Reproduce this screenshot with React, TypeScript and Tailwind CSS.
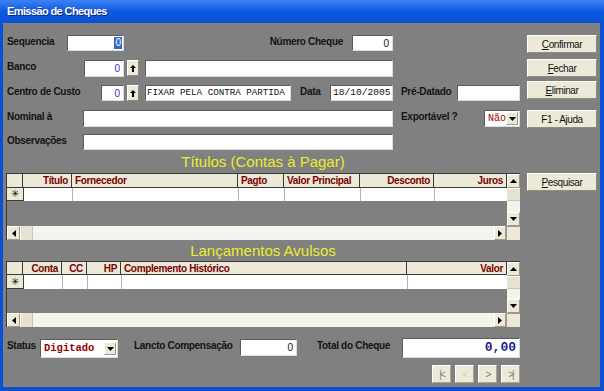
import React from 'react';

type Col = { label: string; w: string; align: 'left' | 'right' };

const titulosCols: Col[] = [
  { label: 'Título', w: 'w-[49px]', align: 'right' },
  { label: 'Fornecedor', w: 'w-[166px]', align: 'left' },
  { label: 'Pagto', w: 'w-[46px]', align: 'left' },
  { label: 'Valor Principal', w: 'w-[76px]', align: 'left' },
  { label: 'Desconto', w: 'w-[74px]', align: 'right' },
  { label: 'Juros', w: 'w-[73px]', align: 'right' },
];

const avulsosCols: Col[] = [
  { label: 'Conta', w: 'w-[39px]', align: 'right' },
  { label: 'CC', w: 'w-[25px]', align: 'right' },
  { label: 'HP', w: 'w-[34px]', align: 'right' },
  { label: 'Complemento Histórico', w: 'w-[286px]', align: 'left' },
  { label: 'Valor', w: 'w-[100px]', align: 'right' },
];

function Label({ children, className = '' }: { children: React.ReactNode; className?: string }) {
  return (
    <span className={`text-[10px] font-bold tracking-[-0.3px] leading-[13px] text-[#141414] whitespace-nowrap shrink-0 ${className}`}>
      {children}
    </span>
  );
}

function Field({ children, className = '' }: { children?: React.ReactNode; className?: string }) {
  return (
    <div
      className={`bg-white border-t border-l border-t-[#5c5c5c] border-l-[#5c5c5c] border-b border-r border-b-[#dcdcdc] border-r-[#dcdcdc] flex items-center shrink-0 overflow-hidden whitespace-nowrap ${className}`}
    >
      {children}
    </div>
  );
}

function Tri({ dir }: { dir: 'up' | 'down' | 'left' | 'right' }) {
  const pts = {
    up: '0,4 3.5,0 7,4',
    down: '0,0 7,0 3.5,4',
    left: '4,0 4,7 0,3.5',
    right: '0,0 0,7 4,3.5',
  }[dir];
  const vertical = dir === 'up' || dir === 'down';
  return (
    <svg width={vertical ? 7 : 4} height={vertical ? 4 : 7} viewBox={vertical ? '0 0 7 4' : '0 0 4 7'}>
      <polygon points={pts} fill="#000" />
    </svg>
  );
}

function ScrollBtn({ dir, className = '' }: { dir: 'up' | 'down' | 'left' | 'right'; className?: string }) {
  return (
    <div className={`bg-[#ece9d8] border-t border-l border-t-white border-l-white border-b border-r border-b-[#9d9a8a] border-r-[#9d9a8a] flex items-center justify-center shrink-0 ${className}`}>
      <Tri dir={dir} />
    </div>
  );
}

function LookupBtn() {
  return (
    <div className="w-[12px] h-[16px] ml-[3px] bg-[#ece9d8] border-t border-l border-white border-b border-r border-b-[#8a887c] border-r-[#8a887c] flex items-center justify-center shrink-0">
      <svg width="6" height="7" viewBox="0 0 6 7">
        <polygon points="3,0 6,3 4,3 4,7 2,7 2,3 0,3" fill="#000" />
      </svg>
    </div>
  );
}

function Combo({ value, className = '', textClass = '' }: { value: string; className?: string; textClass?: string }) {
  return (
    <Field className={`justify-between pl-[3px] pr-[1px] ${className}`}>
      <span className={`font-['Liberation_Mono',monospace] text-[#9a0000] ${textClass}`}>{value}</span>
      <ScrollBtn dir="down" className="w-[12px] h-[13px]" />
    </Field>
  );
}

function Btn({ children, className = '' }: { children: React.ReactNode; className?: string }) {
  return (
    <div
      className={`w-[70px] h-[18px] bg-[#ece9d8] border-t border-l border-t-white border-l-white border-b border-r border-b-[#8f8c7e] border-r-[#8f8c7e] flex items-center justify-center text-[10px] tracking-[-0.4px] text-[#111] ${className}`}
    >
      {children}
    </div>
  );
}

function DataGrid({ cols, headerH, rowH, fillH }: { cols: Col[]; headerH: string; rowH: string; fillH: string }) {
  return (
    <div className="w-[514px] flex flex-col border-l border-t border-[#3a3a3a]">
      <div className="flex">
        <div className="w-[500px] flex flex-col">
          <div className={`flex bg-[#ece9d8] border-b border-[#3a3a3a] ${headerH}`}>
            <div className="w-[16px] border-r border-[#3a3a3a] shrink-0" />
            {cols.map((c) => (
              <div
                key={c.label}
                className={`${c.w} shrink-0 border-r border-[#3a3a3a] px-[3px] flex items-center text-[10px] font-bold tracking-[-0.35px] text-[#7a0000] whitespace-nowrap overflow-hidden ${c.align === 'right' ? 'justify-end' : 'justify-start'}`}
              >
                {c.label}
              </div>
            ))}
          </div>
          <div className={`flex ${rowH}`}>
            <div className="w-[17px] bg-[#ece9d8] border-r border-b border-[#3a3a3a] shrink-0 flex items-center justify-center text-[10px] leading-none text-[#111]">
              ✳
            </div>
            {cols.map((c) => (
              <div key={c.label} className={`${c.w} shrink-0 bg-white border-r border-[#b4b4b4]`} />
            ))}
          </div>
          <div className={`${fillH}`} />
        </div>
        <div className="w-[13px] flex flex-col">
          <ScrollBtn dir="up" className="h-[14px]" />
          <div className="h-[13px] bg-[#e6e3d3] border-t border-white border-b border-b-[#c9c6b6]" />
          <div className="flex-1 bg-[#f4f3ee]" />
          <ScrollBtn dir="down" className="h-[14px]" />
        </div>
      </div>
      <div className="flex h-[14px]">
        <div className="w-[500px] flex bg-[#f4f3ee]">
          <ScrollBtn dir="left" className="w-[13px]" />
          <div className="w-[13px] bg-[#e6e3d3] border-l border-white border-r border-r-[#c9c6b6]" />
          <div className="flex-1" />
          <ScrollBtn dir="right" className="w-[12px]" />
        </div>
        <div className="w-[14px] bg-[#ece9d8] border-t border-l border-[#9d9a8a]" />
      </div>
    </div>
  );
}

export default function App() {
  return (
    <div className="w-[604px] h-[391px] flex flex-col overflow-hidden font-['Liberation_Sans',Arial,sans-serif]">
      {/* Title bar */}
      <div className="h-[23px] shrink-0 bg-gradient-to-b from-[#3a82f2] via-[#0c5ae0] to-[#0a50d4] flex items-center pl-[7px]">
        <span className="text-white text-[11px] font-bold tracking-[-0.6px] [text-shadow:1px_1px_0_#0a2a80]">Emissão de Cheques</span>
      </div>

      {/* Body */}
      <div className="flex-1 bg-[#808080] border-l-[3px] border-r-[4px] border-b-[4px] border-[#0b4fd4] flex pl-[3px] pt-[12px] gap-[7px]">
        {/* Left: form */}
        <div className="w-[514px] flex flex-col">
          <div className="flex items-start h-[16px]">
            <Label className="w-[61px] pl-[1px]">Sequencia</Label>
            <Field className="w-[57px] h-[16px] justify-end pr-[1px]">
              <span className="bg-[#316ac5] text-white text-[10px] leading-[12px] px-[1px]">0</span>
            </Field>
            <Label className="w-[228px] text-right pr-[9px]">Número Cheque</Label>
            <Field className="w-[41px] h-[16px] justify-end pr-[3px] text-[10px] text-[#111]">0</Field>
          </div>

          <div className="flex items-start h-[17px] mt-[9px]">
            <Label className="w-[78px] pl-[1px]">Banco</Label>
            <Field className="w-[40px] h-[17px] justify-end pr-[3px] text-[10px] text-[#3434c8]">0</Field>
            <LookupBtn />
            <Field className="w-[248px] h-[17px] ml-[6px]" />
          </div>

          <div className="flex items-start h-[16px] mt-[8px]">
            <Label className="w-[95px] pl-[1px]">Centro de Custo</Label>
            <Field className="w-[23px] h-[16px] justify-end pr-[3px] text-[10px] text-[#3434c8]">0</Field>
            <LookupBtn />
            <Field className="w-[146px] h-[16px] ml-[6px] pl-[1px] font-['Liberation_Mono',monospace] text-[9.2px] text-[#111]">
              FIXAR PELA CONTRA PARTIDA
            </Field>
            <Label className="w-[39px] pl-[9px]">Data</Label>
            <Field className="w-[63px] h-[16px] pl-[2px] font-['Liberation_Mono',monospace] text-[9.6px] text-[#111]">
              18/10/2005
            </Field>
            <Label className="w-[64px] pl-[8px]">Pré-Datado</Label>
            <Field className="w-[63px] h-[16px]" />
          </div>

          <div className="flex items-start h-[17px] mt-[9px]">
            <Label className="w-[77px] pl-[1px]">Nominal à</Label>
            <Field className="w-[310px] h-[17px]" />
            <Label className="w-[91px] pl-[8px]">Exportável ?</Label>
            <Combo value="Não" className="w-[36px] h-[17px]" textClass="text-[10px]" />
          </div>

          <div className="flex items-start h-[16px] mt-[7px]">
            <Label className="w-[77px] pl-[1px]">Observações</Label>
            <Field className="w-[310px] h-[16px]" />
          </div>

          <div className="h-[23px] flex items-center justify-center text-[15px] text-[#ecec2c] leading-none">
            Títulos (Contas à Pagar)
          </div>
          <DataGrid cols={titulosCols} headerH="h-[14px]" rowH="h-[13px]" fillH="h-[25px]" />

          <div className="h-[21px] flex items-center justify-center text-[15px] text-[#ecec2c] leading-none">
            Lançamentos Avulsos
          </div>
          <DataGrid cols={avulsosCols} headerH="h-[13px]" rowH="h-[14px]" fillH="h-[24px]" />

          <div className="flex items-start h-[20px] mt-[11px]">
            <Label className="w-[34px] pl-[1px] mt-[1px]">Status</Label>
            <Combo value="Digitado" className="w-[78px] h-[19px] mt-[1px]" textClass="text-[10.5px] font-bold" />
            <Label className="w-[122px] pl-[16px] mt-[1px]">Lancto Compensação</Label>
            <Field className="w-[57px] h-[17px] mt-[1px] justify-end pr-[3px] text-[10px] text-[#111]">0</Field>
            <Label className="w-[105px] pl-[20px] mt-[1px]">Total do Cheque</Label>
            <Field className="w-[118px] h-[20px] justify-end pr-[3px] font-['Liberation_Mono',monospace] font-bold text-[13px] text-[#1c1c8c]">
              0,00
            </Field>
          </div>

          <div className="flex justify-end gap-[4px] mt-[7px]">
            {[
              { t: '|<', c: 'text-[#7d7d7d]' },
              { t: '<', c: 'text-[#cfcdc2]' },
              { t: '>', c: 'text-[#7d7d7d]' },
              { t: '>|', c: 'text-[#7d7d7d]' },
            ].map((b) => (
              <div
                key={b.t}
                className={`w-[19px] h-[18px] bg-[#ece9d8] border-t border-l border-white border-b border-r border-b-[#a9a696] border-r-[#a9a696] flex items-center justify-center text-[10px] tracking-[-2px] ${b.c}`}
              >
                {b.t}
              </div>
            ))}
          </div>
        </div>

        {/* Right: buttons */}
        <div className="w-[70px] flex flex-col">
          <Btn>
            <span><span className="underline">C</span>onfirmar</span>
          </Btn>
          <Btn className="mt-[6px]">
            <span><span className="underline">F</span>echar</span>
          </Btn>
          <Btn className="mt-[4px]">
            <span><span className="underline">E</span>liminar</span>
          </Btn>
          <Btn className="mt-[11px]">F1 - Ajuda</Btn>
          <Btn className="mt-[45px]">
            <span><span className="underline">P</span>esquisar</span>
          </Btn>
        </div>
      </div>
    </div>
  );
}
